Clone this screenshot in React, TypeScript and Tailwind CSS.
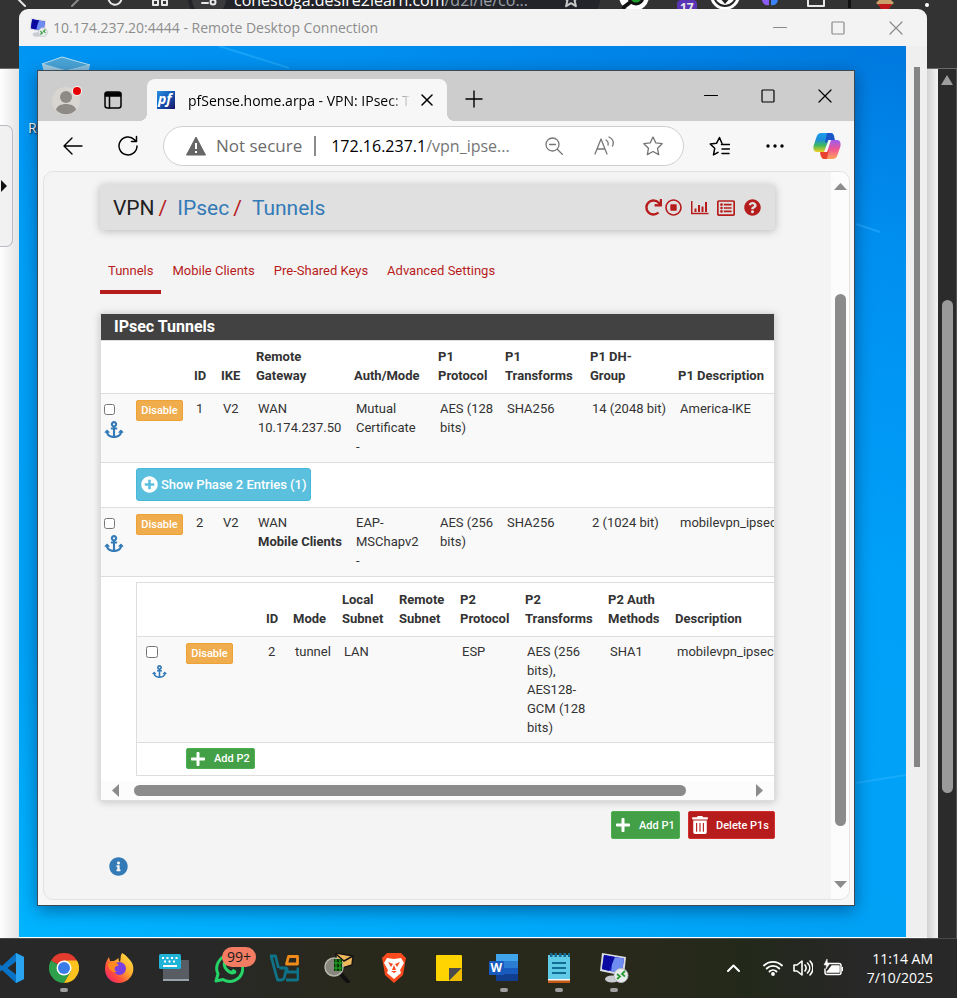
import type { ReactNode } from "react";
import {
  FaAnchor,
  FaInfoCircle,
  FaPlus,
  FaPlusCircle,
  FaQuestionCircle,
  FaRedo,
  FaRegListAlt,
  FaRegStopCircle,
  FaTrashAlt,
} from "react-icons/fa";

const line = { fill: "none", stroke: "currentColor", strokeLinecap: "round", strokeLinejoin: "round" } as const;

/* ---------- host browser behind the remote session ---------- */

function HostToolbar() {
  return (
    <header className="h-[69px] overflow-hidden border-b border-[#6b6b6b] bg-[#333333] text-[#e8e8e8]">
      <div className="-mt-[21px] flex h-[40px] items-center whitespace-nowrap">
        <svg className="ml-[16px] size-[18px] shrink-0" viewBox="0 0 18 18" {...line} strokeWidth="2">
          <path d="M16 9H3M9 2 2 9l7 7" />
        </svg>
        <svg className="ml-[29px] size-[18px] shrink-0 text-[#8b8b8b]" viewBox="0 0 18 18" {...line} strokeWidth="2">
          <path d="M2 9h13M9 2l7 7-7 7" />
        </svg>
        <svg className="ml-[25px] size-[18px] shrink-0" viewBox="0 0 18 18" {...line} strokeWidth="2">
          <path d="M15.500 8a6.500 6.500 0 1 1-2-4.500M15 1v4h-4" />
        </svg>
        <svg className="ml-[27px] size-[18px] shrink-0" viewBox="0 0 18 18" {...line} strokeWidth="2">
          <path d="M2 2h5v5H2zM11 2h5v5h-5zM2 10h5v5H2zM11 10h5v5h-5z" />
        </svg>
        <div className="ml-[19px] flex h-[40px] w-[412px] shrink-0 items-center rounded-full bg-[#23242a]">
          <span className="ml-[4px] flex size-[34px] items-center justify-center rounded-full bg-[#3a3a3d]">
            <svg className="size-[18px]" viewBox="0 0 18 18" {...line} strokeWidth="2">
              <path d="M2 5h7M2 13h6" />
              <circle cx="13" cy="5" r="2.500" />
              <circle cx="13" cy="12" r="2.500" />
            </svg>
          </span>
          <span className="mt-[2px] ml-[8px] w-[328px] font-['Open_Sans'] text-[16px] text-white">
            conestoga.desire2learn.com<span className="text-[#9aa0a6]">/d2l/le/co...</span>
          </span>
          <svg className="size-[18px] shrink-0 text-[#c8c8c8]" viewBox="0 0 18 18" {...line} strokeWidth="2">
            <path d="m9 1 2.200 5.200 5.800.5-4.400 3.800 1.300 5.700L9 13.200l-4.900 3 1.300-5.700L1 6.700l5.800-.5z" />
          </svg>
        </div>
        <svg className="ml-[18px] size-[32px] shrink-0" viewBox="0 0 32 32">
          <circle cx="16" cy="13" r="15" fill="#fff" />
          <path d="M6 24l8-6" stroke="#111" strokeWidth="4" strokeLinecap="round" />
          <circle cx="18" cy="14" r="7" fill="#1c9c2c" stroke="#111" strokeWidth="3" />
        </svg>
        <span className="mt-[18px] ml-[27px] rounded-[4px] bg-[#5b34b4] px-[3px] font-['Open_Sans'] text-[12px] leading-[16px] font-bold">
          17
        </span>
        <svg className="ml-[12px] size-[32px] shrink-0" viewBox="0 0 32 32">
          <circle cx="16" cy="12" r="15" fill="#fff" />
          <circle cx="16" cy="12" r="11" fill="none" stroke="#222" strokeWidth="2" />
          <path d="M10 14l6 7 6-7-3-5h-6z" fill="#222" />
        </svg>
        <svg className="ml-[20px] size-[18px] shrink-0" viewBox="0 0 18 18">
          <path d="M8 1C3 1 1 5 1 9c0 5 4 7 7 6z" fill="#8b5cf6" />
          <path d="M10 1c5 0 7 4 7 8 0 5-4 7-7 6z" fill="#3b82f6" />
        </svg>
        <svg className="ml-[27px] size-[20px] shrink-0" viewBox="0 0 20 20" {...line} strokeWidth="2">
          <path d="M2 6h5V3h5v3h6v11H2z" />
        </svg>
        <span className="ml-[22px] h-[18px] w-[3px] bg-[#111111]" />
        <svg className="ml-[22px] size-[24px] shrink-0" viewBox="0 0 24 24">
          <path d="M3 16l9-9 9 9-5 4H8z" fill="#c9a06a" />
          <path d="M5 17h14l-3 5H8z" fill="#c01818" />
        </svg>
        <span className="ml-[28px] mt-[12px] size-[4px] shrink-0 rounded-full bg-white" />
      </div>
    </header>
  );
}

function HostPage() {
  return (
    <div className="flex flex-1 justify-between bg-white">
      <div className="w-[19px] bg-gradient-to-r from-white to-[#e3e3e3] pt-[56px]">
        <div className="flex h-[122px] w-[13px] items-center rounded-r-[7px] border border-l-0 border-[#b9bcc2] bg-[#f1f1f2]">
          <svg className="h-[14px] w-[7px]" viewBox="0 0 7 14">
            <path d="M1 1v12l6-6z" fill="#111" />
          </svg>
        </div>
      </div>
      <div className="flex w-[30px]">
        <div className="w-[11px] bg-gradient-to-r from-[#d2d2d2] to-[#f3f3f3]" />
        <div className="flex flex-1 flex-col items-center border-r border-[#555555] bg-[#2b2b2b] pt-[6px]">
          <svg className="h-[10px] w-[12px]" viewBox="0 0 12 10">
            <path d="M6 0 12 10H0z" fill="#9d9d9d" />
          </svg>
          <div className="mt-[215px] h-[493px] w-[11px] rounded-full bg-[#9a9a9a]" />
        </div>
      </div>
    </div>
  );
}

/* ---------- remote desktop window ---------- */

function RdpIcon({ className }: { className: string }) {
  return (
    <svg className={className} viewBox="0 0 30 30">
      <ellipse cx="13" cy="26" rx="7" ry="3.500" fill="#c9ccd2" />
      <path d="M3 0l24 4-2 19L1 18z" fill="#d8dbe2" />
      <path d="M5 2l20 3.500-2 15L3 16z" fill="#1414c8" />
      <path d="M14 4l11 1.500-2 15-11-2z" fill="#6f8df0" />
      <path d="M5 2l11 2-6 14-7-2z" fill="#0a0aa0" />
      <circle cx="22" cy="22.500" r="7" fill="#e9ebec" stroke="#b8bcc0" />
      <path d="M18 21l3 2.500-3 2.500M26 18l-3 3 3 2.500" fill="none" stroke="#2a9a32" strokeWidth="1.800" />
    </svg>
  );
}

function WindowControls({ className, wide }: { className: string; wide: string }) {
  return (
    <div className={className}>
      <button type="button" aria-label="Minimize" className={wide}>
        <svg className="size-[14px]" viewBox="0 0 14 14" {...line}>
          <path d="M.5 6.500h13" />
        </svg>
      </button>
      <button type="button" aria-label="Maximize" className={wide}>
        <svg className="size-[14px]" viewBox="0 0 14 14" {...line}>
          <rect x="1" y="1" width="12" height="12" rx="1" strokeWidth="1.200" />
        </svg>
      </button>
      <button type="button" aria-label="Close" className={wide}>
        <svg className="size-[14px]" viewBox="0 0 14 14" {...line} strokeWidth="1.200">
          <path d="m1 1 12 12M13 1 1 13" />
        </svg>
      </button>
    </div>
  );
}

function RemoteDesktop({ children }: { children: ReactNode }) {
  return (
    <section className="absolute top-[9px] right-[30px] bottom-[60px] left-[19px] flex flex-col overflow-hidden rounded-t-[9px] border-b border-white bg-[#f3f3f3]">
      <div className="flex h-[37px] shrink-0 items-center pl-[10px]">
        <RdpIcon className="size-[19px]" />
        <h1 className="ml-[5px] font-['Open_Sans'] text-[14px] text-[#8d8d8d]">
          10.174.237.20:4444 - Remote Desktop Connection
        </h1>
        <WindowControls
          className="mr-[2px] ml-auto flex self-stretch text-[#8a8a8a]"
          wide="flex w-[58px] items-center justify-center"
        />
      </div>
      <div className="flex min-h-0 flex-1">
        <div className="relative flex-1 overflow-hidden bg-[linear-gradient(200deg,#0078de_0%,#0090f0_18%,#00a0f8_45%,#00a2f6_75%,#00b4ff_100%)]">
          <svg className="absolute inset-0 size-full" preserveAspectRatio="none" viewBox="0 0 887 891">
            <path d="M200 0 270 22M837 178l24 8M837 737l50-8" stroke="#2fb4ff" strokeWidth="2" opacity=".5" />
          </svg>
          <svg className="absolute top-[10px] left-[23px] h-[40px] w-[48px]" viewBox="0 0 48 40">
            <path d="M0 8 20 1l28 8-24 6z" fill="#4aa6d8" stroke="#b9e1f4" />
            <path d="M0 8l24 7v25L6 36z" fill="#a5cfe4" />
            <path d="M48 9l-24 6v25l18-4z" fill="#8cc4e0" />
          </svg>
          <span className="absolute top-[71px] left-[9px] font-['Open_Sans'] text-[14px] text-white [text-shadow:1px_1px_2px_#000]">
            R
          </span>
          {children}
        </div>
        <div className="flex w-[21px] justify-center bg-[#efefef] pt-[21px]">
          <div className="h-[700px] w-[6px] bg-[#858585]" />
        </div>
      </div>
    </section>
  );
}

/* ---------- Edge window inside the session ---------- */

function EdgeTabs() {
  return (
    <div className="flex h-[50px] shrink-0 items-end bg-[#cdcdcd]">
      <div className="flex flex-1 items-end">
        <button type="button" aria-label="Profile" className="mb-[5px] ml-[14px] size-[32px]">
          <svg viewBox="0 0 32 32">
            <circle cx="14" cy="17" r="14" fill="#d9d6d2" />
            <circle cx="14" cy="13" r="6" fill="#8e8a86" />
            <path d="M4 26c1-8 19-8 20 0a14 14 0 0 1-20 0z" fill="#8e8a86" />
            <circle cx="25" cy="7" r="5" fill="#f5f5f5" />
            <circle cx="25" cy="7" r="4" fill="#e60000" />
          </svg>
        </button>
        <button type="button" aria-label="Tab actions" className="mb-[12px] ml-[20px] size-[18px]">
          <svg viewBox="0 0 18 18" {...line} strokeWidth="1.500">
            <rect x="1" y="1" width="16" height="16" rx="2.500" />
            <path d="M1.500 2h15v3h-15z" fill="currentColor" />
            <path d="M5.500 5v12" />
          </svg>
        </button>
        <span className="ml-[17px] size-[8px] bg-[radial-gradient(circle_at_0_0,#cdcdcd_8px,#f7f7f7_8px)]" />
        <div className="flex h-[42px] w-[300px] items-center rounded-t-[8px] bg-[#f7f7f7] pl-[10px]">
          <svg className="size-[18px]" viewBox="0 0 18 18">
            <defs>
              <linearGradient id="pf" x1="0" x2="1" y1="0" y2="1">
                <stop offset="0" stopColor="#2d8fe0" />
                <stop offset=".5" stopColor="#1556b4" />
                <stop offset="1" stopColor="#1b1464" />
              </linearGradient>
            </defs>
            <rect width="18" height="18" fill="url(#pf)" />
            <text x="1" y="13" fill="#fff" fontFamily="Open Sans" fontSize="14" fontStyle="italic" fontWeight="700">
              pf
            </text>
          </svg>
          <span className="ml-[13px] w-[223px] overflow-hidden font-['Open_Sans'] text-[14px] whitespace-nowrap text-black [mask-image:linear-gradient(to_right,#000_90%,transparent_100%)]">
            pfSense.home.arpa - VPN: IPsec: Tunnels
          </span>
          <button type="button" aria-label="Close tab" className="ml-[10px] size-[12px]">
            <svg viewBox="0 0 12 12" {...line} strokeWidth="1.500">
              <path d="m1 1 10 10M11 1 1 11" />
            </svg>
          </button>
        </div>
        <span className="size-[8px] bg-[radial-gradient(circle_at_100%_0,#cdcdcd_8px,#f7f7f7_8px)]" />
        <button type="button" aria-label="New tab" className="mb-[13px] ml-[10px] size-[18px]">
          <svg viewBox="0 0 18 18" {...line} strokeWidth="1.400">
            <path d="M9 1v16M1 9h16" />
          </svg>
        </button>
      </div>
      <WindowControls className="mr-px flex h-full text-black" wide="flex w-[57px] items-center justify-center" />
    </div>
  );
}

function EdgeToolbar() {
  return (
    <div className="flex h-[50px] shrink-0 items-center bg-[#f7f7f7] text-black">
      <button type="button" aria-label="Back" className="ml-[25px] size-[20px]">
        <svg viewBox="0 0 20 20" {...line} strokeWidth="1.400">
          <path d="M19 10H1M9 2 1 10l8 8" />
        </svg>
      </button>
      <button type="button" aria-label="Refresh" className="ml-[34px] size-[22px]">
        <svg viewBox="0 0 22 22" {...line} strokeWidth="1.500">
          <path d="M20 11a9 9 0 1 1-2.500-6.300L19 6.500M19.500 1.500v5h-5" />
        </svg>
      </button>
      <div className="ml-[24px] flex h-[40px] flex-1 items-center rounded-full border border-[#cfcfcf] bg-white font-['Open_Sans'] text-[17px]">
        <svg className="ml-[22px] size-[20px] shrink-0" viewBox="0 0 20 20">
          <path d="M10 1 19.500 19H.5z" fill="#666" stroke="#666" strokeLinejoin="round" />
          <path d="M10 7v6M10 15v2" stroke="#fff" strokeWidth="2" />
        </svg>
        <span className="ml-[10px] text-[#6b6b6b]">Not secure</span>
        <span className="mr-[15px] ml-[12px] h-[20px] w-[2px] bg-[#8a8a8a]" />
        <label htmlFor="address" className="sr-only">
          Address
        </label>
        <span className="relative flex min-w-0 flex-1">
          <input id="address" defaultValue="" className="absolute inset-0 bg-transparent outline-none" />
          <span className="pointer-events-none text-[16px] whitespace-nowrap">
            172.16.237.1<span className="text-[#767676]">/vpn_ipse...</span>
          </span>
        </span>
        <button type="button" aria-label="Zoom" className="size-[18px] text-[#767676]">
          <svg viewBox="0 0 18 18" {...line} strokeWidth="1.300">
            <circle cx="7.500" cy="7.500" r="6.500" />
            <path d="m12.500 12.500 5 5M4.500 7.500h6" />
          </svg>
        </button>
        <button type="button" aria-label="Read aloud" className="ml-[31px] size-[20px] text-[#767676]">
          <svg viewBox="0 0 20 20" {...line} strokeWidth="1.300">
            <path d="M1 18 7 3l6 15M3 13h8M12 4c2 1 2.500 3 2 5M15 1c4 2 5 5.500 3.500 9" />
          </svg>
        </button>
        <button type="button" aria-label="Add to favorites" className="mr-[20px] ml-[29px] size-[20px] text-[#767676]">
          <svg viewBox="0 0 20 20" {...line} strokeWidth="1.300">
            <path d="m10 1 2.800 5.900 6.400.8-4.700 4.500 1.200 6.400L10 15.500l-5.700 3.100 1.200-6.400L.8 7.700l6.400-.8z" />
          </svg>
        </button>
      </div>
      <button type="button" aria-label="Favorites" className="ml-[25px] size-[21px]">
        <svg viewBox="0 0 21 21" {...line} strokeWidth="1.500">
          <path d="M13 7.500 10.500 1.500 7.600 7.200l-6.400.8 4.500 4.300-1.200 6.500 4.500-2.400M12.500 8.500h8M13 13h7.500M13 17.500h7" />
        </svg>
      </button>
      <button type="button" aria-label="Settings and more" className="ml-[36px] size-[18px]">
        <svg viewBox="0 0 18 18" fill="#000">
          <circle cx="2" cy="9" r="1.700" />
          <circle cx="9" cy="9" r="1.700" />
          <circle cx="16" cy="9" r="1.700" />
        </svg>
      </button>
      <button type="button" aria-label="Copilot" className="mr-[13px] ml-[29px] size-[28px]">
        <svg viewBox="0 0 28 28">
          <defs>
            <linearGradient id="cpA" x1="0" x2="0" y1="0" y2="1">
              <stop offset="0" stopColor="#1a9df0" />
              <stop offset=".35" stopColor="#1f8fd8" />
              <stop offset=".65" stopColor="#3fb860" />
              <stop offset="1" stopColor="#f0d020" />
            </linearGradient>
            <linearGradient id="cpB" x1="0" x2="0" y1="0" y2="1">
              <stop offset="0" stopColor="#9a5cf0" />
              <stop offset=".5" stopColor="#f0568f" />
              <stop offset="1" stopColor="#ffa45a" />
            </linearGradient>
          </defs>
          <path d="M8 1h10c2 0 3 2 3.500 4L17 8l-3 9c-1 3-3 3-5 3H4c-3 0-4-3-3.500-6L3.500 5C4.500 2 6 1 8 1z" fill="url(#cpA)" />
          <path d="M14 1h4c2 0 3 3 4 7h-5c-2 0-3 1-3 3l-2-1z" fill="#1b55c8" />
          <path d="M20 27H11c-2 0-3-2-4-5l4-2 4-9c1-3 3-3 5-3h4c3 0 4 3 3.500 6l-3 9c-1 3-3 4-4.500 4z" fill="url(#cpB)" />
          <path d="M14 27h-3c-2 0-3-3-4-7h5c2 0 3-1 4-3z" fill="#e8432e" />
          <path d="M15.500 8H18l-4 12h-3z" fill="#f7f7f7" />
        </svg>
      </button>
    </div>
  );
}

/* ---------- pfSense page ---------- */

function Breadcrumb() {
  return (
    <header className="flex h-[45px] items-center rounded-[3px] bg-[#e0e0e0] pr-[14px] pl-[13px] shadow-[0_1px_8px_rgba(0,0,0,0.25)]">
      <h2 className="flex text-[21px] leading-[24px] text-[#212121]">
        VPN
        <span className="ml-[4px] text-[#b71c1c]">/</span>
        <a href="#ipsec" className="ml-[10px] text-[#337ab7]">IPsec</a>
        <span className="ml-[4px] text-[#b71c1c]">/</span>
        <a href="#tunnels" className="ml-[10px] text-[#337ab7]">Tunnels</a>
      </h2>
      <div className="ml-auto flex items-center text-[#b71c1c]">
        <a href="#restart" aria-label="Restart service"><FaRedo className="size-[17px]" /></a>
        <a href="#stop" aria-label="Stop service" className="ml-[3px]"><FaRegStopCircle className="size-[17px]" /></a>
        <a href="#status" aria-label="Status" className="ml-[9px]">
          <svg className="h-[15px] w-[18px]" viewBox="0 0 18 15" fill="none" stroke="currentColor">
            <path d="M.75 1v12.500H17.500" strokeWidth="1.500" />
            <path d="M4.500 8.500V12M8 5v7M11.500 6.500V12M15 2v10" strokeWidth="2" />
          </svg>
        </a>
        <a href="#logs" aria-label="Logs" className="ml-[8px]"><FaRegListAlt className="size-[18px]" /></a>
        <a href="#help" aria-label="Help" className="ml-[9px]"><FaQuestionCircle className="size-[17px]" /></a>
      </div>
    </header>
  );
}

function SectionTabs() {
  return (
    <nav className="mt-[20px] flex gap-[3px] text-[13px] leading-[19px] text-[#b71c1c]">
      <a href="#t1" className="border-b-4 border-[#b71c1c] px-2 pt-[11px] pb-[10px]">Tunnels</a>
      <a href="#t2" className="px-2 pt-[11px]">Mobile Clients</a>
      <a href="#t3" className="px-2 pt-[11px]">Pre-Shared Keys</a>
      <a href="#t4" className="px-2 pt-[11px]">Advanced Settings</a>
    </nav>
  );
}

const th = "pl-[4px] align-bottom text-left font-bold whitespace-pre";
const td = "border-t border-[#dddddd] pt-[5px] pb-[6px] pl-[6px] align-top whitespace-pre";

function DisableButton() {
  return (
    <button
      type="button"
      className="mt-px block h-[21px] w-[47px] rounded-[2px] border border-[#eea236] bg-[#f0ad4e] text-[11px] leading-[19px] font-medium text-white"
    >
      Disable
    </button>
  );
}

function SelectCell({ label, anchor, box }: { label: string; anchor: string; box: string }) {
  return (
    <>
      <input type="checkbox" aria-label={label} className={box} />
      <FaAnchor className={anchor} />
    </>
  );
}

type P1 = { id: string; gateway: ReactNode; auth: string; protocol: string; group: string; description: string };

function Phase1Row({ p1 }: { p1: P1 }) {
  return (
    <tr className="bg-[#f9f9f9]">
      <td className="border-t border-[#dddddd] pt-[5px] pl-[3px] align-top">
        <SelectCell
          label={"Select tunnel " + p1.id}
          box="mt-[5px] block size-[11px] accent-[#337ab7]"
          anchor="mt-[6px] h-[17px] w-[20px] text-[#337ab7]"
        />
      </td>
      <td className={td}><DisableButton /></td>
      <td className={td}>{p1.id}</td>
      <td className={td}>V2</td>
      <td className={td}>{p1.gateway}</td>
      <td className={td}>{p1.auth}</td>
      <td className={td}>{p1.protocol}</td>
      <td className={td}>SHA256</td>
      <td className={td}>{p1.group}</td>
      <td className={td}>{p1.description}</td>
    </tr>
  );
}

function Phase2Table() {
  return (
    <table className="w-full table-fixed border-separate border-spacing-0 border border-[#dddddd]">
      <colgroup>
        <col className="w-[43px]" />
        <col className="w-[82px]" />
        <col className="w-[27px]" />
        <col className="w-[49px]" />
        <col className="w-[57px]" />
        <col className="w-[61px]" />
        <col className="w-[65px]" />
        <col className="w-[83px]" />
        <col className="w-[67px]" />
        <col />
      </colgroup>
      <thead>
        <tr className="h-[53px]">
          <th />
          <th />
          <th className={th + " pb-[8px]"}>ID</th>
          <th className={th + " pb-[8px]"}>Mode</th>
          <th className={th + " pb-[8px]"}>{"Local\nSubnet"}</th>
          <th className={th + " pb-[8px]"}>{"Remote\nSubnet"}</th>
          <th className={th + " pb-[8px]"}>{"P2\nProtocol"}</th>
          <th className={th + " pb-[8px]"}>{"P2\nTransforms"}</th>
          <th className={th + " pb-[8px]"}>{"P2 Auth\nMethods"}</th>
          <th className={th + " pb-[8px]"}>Description</th>
        </tr>
      </thead>
      <tbody>
        <tr className="h-[106px] bg-[#f9f9f9]">
          <td className="border-t border-[#dddddd] pt-[5px] pl-[9px] align-top">
            <SelectCell
              label="Select phase 2 entry 2"
              box="mt-[4px] block size-[12px] accent-[#337ab7]"
              anchor="mt-[7px] ml-[6px] h-[13px] w-[15px] text-[#337ab7]"
            />
          </td>
          <td className={td}><DisableButton /></td>
          <td className={td}>2</td>
          <td className={td}>tunnel</td>
          <td className={td}>LAN</td>
          <td className={td} />
          <td className={td}>ESP</td>
          <td className="border-t border-[#dddddd] pt-[5px] pb-[5px] pl-[6px] align-top whitespace-pre">
            {"AES (256\nbits),\nAES128-\nGCM (128\nbits)"}
          </td>
          <td className={td}>SHA1</td>
          <td className={td}>mobilevpn_ipsec</td>
        </tr>
        <tr>
          <td className={td} />
          <td className={td} colSpan={9}>
            <button
              type="button"
              className="flex h-[21px] w-[69px] items-center rounded-[2px] border border-[#4caf50] bg-[#43a047] pl-[3px] text-[11px] font-medium text-white"
            >
              <FaPlus className="mr-[8px] size-[16px]" />
              Add P2
            </button>
          </td>
        </tr>
      </tbody>
    </table>
  );
}

function TunnelsTable() {
  return (
    <table className="w-[760px] table-fixed border-separate border-spacing-0 bg-white">
      <colgroup>
        <col className="w-[29px]" />
        <col className="w-[60px]" />
        <col className="w-[27px]" />
        <col className="w-[35px]" />
        <col className="w-[98px]" />
        <col className="w-[84px]" />
        <col className="w-[67px]" />
        <col className="w-[85px]" />
        <col className="w-[88px]" />
        <col />
      </colgroup>
      <thead>
        <tr className="h-[52px]">
          <th />
          <th />
          <th className={th + " pb-[8px]"}>ID</th>
          <th className={th + " pb-[8px]"}>IKE</th>
          <th className={th + " pb-[8px]"}>{"Remote\nGateway"}</th>
          <th className={th + " pb-[8px]"}>Auth/Mode</th>
          <th className={th + " pb-[8px]"}>{"P1\nProtocol"}</th>
          <th className={th + " pb-[8px]"}>{"P1\nTransforms"}</th>
          <th className={th + " pb-[8px]"}>{"P1 DH-\nGroup"}</th>
          <th className={th + " pb-[8px]"}>P1 Description</th>
        </tr>
      </thead>
      <tbody>
        <Phase1Row
          p1={{
            id: "1",
            gateway: "WAN\n10.174.237.50",
            auth: "Mutual\nCertificate\n-",
            protocol: "AES (128\nbits)",
            group: "14 (2048 bit)",
            description: "America-IKE",
          }}
        />
        <tr>
          <td className={td} />
          <td className={td} colSpan={9}>
            <button
              type="button"
              className="flex h-[33px] w-[175px] items-center rounded-[3px] border border-[#46b8da] bg-[#5bc0de] pl-[4px] text-[13px] font-medium text-white"
            >
              <FaPlusCircle className="mr-[3px] size-[17px]" />
              Show Phase 2 Entries (1)
            </button>
          </td>
        </tr>
        <Phase1Row
          p1={{
            id: "2",
            gateway: (
              <>
                {"WAN\n"}
                <b>Mobile Clients</b>
              </>
            ),
            auth: "EAP-\nMSChapv2\n-",
            protocol: "AES (256\nbits)",
            group: "2 (1024 bit)",
            description: "mobilevpn_ipsec",
          }}
        />
        <tr>
          <td className="border-t border-[#dddddd]" />
          <td className="border-t border-[#dddddd] py-[5px] pl-[6px]" colSpan={9}>
            <Phase2Table />
          </td>
        </tr>
      </tbody>
    </table>
  );
}

function TunnelsPanel() {
  return (
    <section className="mt-[19px] border border-[#dddddd] bg-white shadow-[0_1px_8px_rgba(0,0,0,0.2)]">
      <h3 className="h-[27px] border-b border-[#dddddd] bg-[#424242] pl-[13px] text-[16px] leading-[26px] font-bold text-white">
        IPsec Tunnels
      </h3>
      <div className="overflow-hidden">
        <TunnelsTable />
      </div>
      <div className="flex h-[19px] items-center bg-[#fcfcfc] px-[11px]">
        <svg className="h-[13px] w-[7px]" viewBox="0 0 7 13">
          <path d="M7 0v13L0 6.500z" fill="#8b8b8b" />
        </svg>
        <div className="flex flex-1 px-[15px]">
          <div className="h-[11px] w-[91%] rounded-full bg-[#8b8b8b]" />
        </div>
        <svg className="h-[13px] w-[7px]" viewBox="0 0 7 13">
          <path d="M0 0v13l7-6.500z" fill="#8b8b8b" />
        </svg>
      </div>
    </section>
  );
}

function PfSensePage() {
  return (
    <div className="mr-[4px] mb-[5px] ml-[5px] flex min-h-0 flex-1 overflow-hidden rounded-[10px] border border-[#e2e2e2] bg-[#f4f4f4]">
      <main className="min-w-0 flex-1 overflow-hidden px-14 pt-[13px] font-['Roboto'] text-[13px] leading-[19px] text-[#333333]">
        <Breadcrumb />
        <SectionTabs />
        <TunnelsPanel />
        <div className="mt-[10px] flex justify-end gap-[8px] text-[11px] font-medium text-white">
          <button
            type="button"
            className="flex h-[28px] w-[69px] items-center rounded-[2px] border border-[#4caf50] bg-[#43a047] pl-[3px]"
          >
            <FaPlus className="mr-[8px] size-[16px]" />
            Add P1
          </button>
          <button
            type="button"
            className="flex h-[28px] w-[87px] items-center rounded-[2px] border border-[#d32f2f] bg-[#b71c1c] pl-[3px]"
          >
            <FaTrashAlt className="mr-[8px] h-[18px] w-[16px]" />
            Delete P1s
          </button>
        </div>
        <button type="button" aria-label="Information" className="mt-[18px] ml-[9px] block">
          <FaInfoCircle className="size-[19px] text-[#337ab7]" />
        </button>
      </main>
      <div className="flex w-[18px] flex-col items-center bg-[#fcfcfc] pt-[11px] pb-[11px]">
        <svg className="h-[7px] w-[13px]" viewBox="0 0 13 7">
          <path d="M6.500 0 13 7H0z" fill="#8b8b8b" />
        </svg>
        <div className="mt-[104px] h-[532px] w-[11px] rounded-full bg-[#8b8b8b]" />
        <svg className="mt-auto h-[7px] w-[13px]" viewBox="0 0 13 7">
          <path d="M6.500 7 13 0H0z" fill="#8b8b8b" />
        </svg>
      </div>
    </div>
  );
}

function EdgeWindow() {
  return (
    <section className="absolute top-[24px] right-[51px] bottom-[31px] left-[18px] flex flex-col border border-[#3c4a55] bg-[#f7f7f7] shadow-[0_4px_16px_rgba(0,20,60,0.45)]">
      <EdgeTabs />
      <EdgeToolbar />
      <PfSensePage />
    </section>
  );
}

/* ---------- taskbar ---------- */

function TaskItem({ label, running, children }: { label: string; running?: boolean; children: ReactNode }) {
  return (
    <button type="button" aria-label={label} className="relative flex w-[55px] shrink-0 items-center justify-center">
      {children}
      {running && <span className="absolute bottom-[4px] h-[4px] w-[8px] rounded-full bg-[#9f9f9f]" />}
    </button>
  );
}

const glyph = "size-[30px]";

function Taskbar() {
  return (
    <footer className="absolute inset-x-0 bottom-0 flex h-[60px] border-t border-[#4a4a4a] bg-[linear-gradient(90deg,#282828_0%,#282828_22%,#29291b_38%,#29291b_65%,#23291a_78%,#252722_85%,#282828_90%)] pb-[2px] text-white">
      <div className="-ml-[19px] flex">
        <TaskItem label="Visual Studio Code">
          <svg className={glyph} viewBox="0 0 30 30">
            <path d="M22 0 8 13 3 9 0 11l5 4-5 4 3 2 5-4 14 13 8-4V4z" fill="#0a72c4" />
            <path d="M22 0v30l8-4V4z" fill="#2aa4f0" />
            <path d="M22 8.500v13L13.500 15z" fill="#282828" />
          </svg>
        </TaskItem>
        <TaskItem label="Google Chrome" running>
          <svg className={glyph} viewBox="0 0 30 30">
            <path d="M15 15 2 7.500A15 15 0 0 1 28 7.500z" fill="#e33b2e" />
            <path d="M15 15 2 7.500A15 15 0 0 0 15 30l6.500-11z" fill="#2e9f4b" />
            <path d="M15 7.500h13A15 15 0 0 1 15 30l7-12z" fill="#fcc31e" />
            <circle cx="15" cy="15" r="7.500" fill="#fff" />
            <circle cx="15" cy="15" r="6" fill="#3b7de8" />
          </svg>
        </TaskItem>
        <TaskItem label="Firefox">
          <svg className={glyph} viewBox="0 0 30 30">
            <defs>
              <linearGradient id="ff" x1="1" x2="0" y1="0" y2="1">
                <stop offset="0" stopColor="#fff04a" />
                <stop offset=".4" stopColor="#ffab2e" />
                <stop offset=".7" stopColor="#ff4a3c" />
                <stop offset="1" stopColor="#e6148c" />
              </linearGradient>
            </defs>
            <path
              d="M18 0c4 2 5 4 7 6 4 4 5 8 4 13-2 7-8 11-14 11C7 30 1 24 1 16c0-4 1-8 4-12l1 4 4 0 5-3c-1 2 0 3 1 4 1-3 0-6 2-9z"
              fill="url(#ff)"
            />
            <circle cx="15.500" cy="15.500" r="6.500" fill="#7a3fe0" />
            <path d="M4 11c4-3 8-2 11 1l-4 2c-1 3 0 4 2 5-5 1-9-3-9-8z" fill="#ff8a1f" />
          </svg>
        </TaskItem>
        <TaskItem label="On-screen keyboard">
          <svg className={glyph} viewBox="0 0 30 30">
            <rect x="4" y="7" width="26" height="21" rx="1" fill="#585d63" />
            <path d="M4 26h26v2H4z" fill="#9aa3ac" />
            <rect x="0" y="1" width="22" height="15" rx="1.500" fill="#1fb3d8" />
            <path d="M3 5h16" stroke="#fff" strokeWidth="2" strokeDasharray="2 2.500" />
            <path d="M5 8.500h13" stroke="#fff" strokeWidth="2" strokeDasharray="2 2.500" />
            <path d="M4 13h14" stroke="#fff" strokeWidth="2" />
          </svg>
        </TaskItem>
        <TaskItem label="WhatsApp">
          <svg className={glyph} viewBox="0 0 30 30">
            <path d="M2 28l2-7A13 13 0 1 1 9 26.500z" fill="none" stroke="#25d366" strokeWidth="3" strokeLinejoin="round" />
            <path d="M9 9c2-2 3-1 4 2l-1 2c1 2 3 4 5 5l2-2c3 1 4 2 3 4-5 5-15-4-13-11z" fill="#25d366" />
          </svg>
          <span className="absolute top-[8px] right-0 h-[20px] w-[34px] rounded-full bg-[#f47c62] text-center font-['Open_Sans'] text-[14px] leading-[20px] text-[#1b1b1b]">
            99+
          </span>
        </TaskItem>
        <TaskItem label="Security client">
          <svg className={glyph} viewBox="0 0 30 30" fill="none" strokeWidth="2.800" strokeLinejoin="round">
            <path d="M1 3h5.500l3 12M2 3l6.500 24h4c2 0 2.500-1 3-3l2-9h-7" stroke="#0e7288" />
            <path d="M29 14.500V26l-1 1H17" stroke="#0e7288" />
            <path d="M29 19H18v-4" stroke="#0e7288" />
            <path d="M17.500 11l2-7.500h9V11z" stroke="#f08c1a" />
          </svg>
        </TaskItem>
        <TaskItem label="Mail inspector">
          <svg className={glyph} viewBox="0 0 30 30">
            <path d="M12 0l17 3-1 9-16 5z" fill="#efb95a" stroke="#151515" strokeWidth="1.500" />
            <path d="M12 1l8 7 9-5" fill="none" stroke="#151515" strokeWidth="1.500" />
            <path d="M16 20l9 10" stroke="#111" strokeWidth="4" />
            <circle cx="10" cy="14" r="9" fill="#86867c" stroke="#b5b5aa" strokeWidth="1.500" />
            <path d="M10 6h8v12h-8z" fill="#0a3a0a" />
            <path d="M12 6v12M16 6v12M10 10h9M10 15h9" stroke="#25b325" />
          </svg>
        </TaskItem>
        <TaskItem label="Brave">
          <svg className={glyph} viewBox="0 0 30 30">
            <path d="M8 0h14l5 5-1 5-2 12-9 8-9-8-2-12-1-5z" fill="#fb4a1e" />
            <path d="M8 5l7 1 7-1 3 5-4 7 1 3-7 6-7-6 1-3-4-7z" fill="#fff" />
            <path d="M9 9l5 2-2 3zM21 9l-5 2 2 3zM12 18h6l-3 2zM15 12l2 5h-4z" fill="#fb4a1e" />
          </svg>
        </TaskItem>
        <TaskItem label="Sticky Notes">
          <svg className={glyph} viewBox="0 0 30 30">
            <path d="M3 2h24a1 1 0 0 1 1 1v25H3a1 1 0 0 1-1-1V3a1 1 0 0 1 1-1z" fill="#ffd400" />
            <path d="M15 28V15h13z" fill="#4b4b4b" />
            <path d="M28 15v13H15z" fill="#eebc00" />
          </svg>
        </TaskItem>
        <TaskItem label="Word" running>
          <svg className={glyph} viewBox="0 0 30 30">
            <rect x="7" y="1" width="22" height="27" rx="1.500" fill="#2b7cd3" />
            <path d="M7 1h22v7H7z" fill="#41a5ee" />
            <path d="M7 15h22v7H7z" fill="#185abd" />
            <path d="M7 21h22v7H7z" fill="#103f91" />
            <rect x="0" y="8" width="15" height="14" rx="1" fill="#185abd" />
            <text x="1.500" y="19" fill="#fff" fontFamily="Open Sans" fontSize="12" fontWeight="700">
              W
            </text>
          </svg>
        </TaskItem>
        <TaskItem label="Notepad" running>
          <svg className={glyph} viewBox="0 0 30 30">
            <path d="M4 25h22v5H4z" fill="#c65a14" />
            <path d="M4 2h22v24H4z" fill="#5fcbe6" />
            <path d="M4 26h22v1.500H4z" fill="#f5f5f5" />
            <path d="M8 10h14M8 15h14M8 20h14" stroke="#136c94" strokeWidth="2" />
            <path d="M6 2h20" stroke="#136c94" strokeWidth="4" strokeDasharray="2.500 2" />
          </svg>
        </TaskItem>
        <TaskItem label="Remote Desktop Connection" running>
          <RdpIcon className={glyph} />
        </TaskItem>
      </div>
      <div className="ml-auto flex items-center pr-[24px]">
        <svg className="h-[8px] w-[13px]" viewBox="0 0 13 8" {...line} strokeWidth="2">
          <path d="m1 7 5.500-5.500L12 7" />
        </svg>
        <svg className="ml-[23px] h-[16px] w-[20px]" viewBox="0 0 20 16" {...line} strokeWidth="1.800">
          <path d="M1 5.500a13 13 0 0 1 18 0M3.700 8.500a9 9 0 0 1 12.600 0M6.500 11.500a5 5 0 0 1 7 0" />
          <circle cx="10" cy="14" r="1" fill="currentColor" />
        </svg>
        <svg className="ml-[10px] h-[18px] w-[20px]" viewBox="0 0 20 18" {...line} strokeWidth="1.600">
          <path d="M1 6h3l5-4v14l-5-4H1zM12 6c1.500 2 1.500 4 0 6M14.500 4c3 3 3 7 0 10M17 2c4 4 4 10 0 14" />
        </svg>
        <svg className="ml-[10px] h-[17px] w-[20px]" viewBox="0 0 20 17" {...line} strokeWidth="1.500">
          <path d="M7 4.500h9q2 0 2 2v7q0 2-2 2H4q-2 0-2-2V10" />
          <path d="M9 7h7v6H4l2-2z" fill="currentColor" />
          <path d="M4 0 1 6h2.500L3 10l4-6H4.500z" fill="currentColor" strokeWidth=".5" />
          <path d="M19.500 8.500v3" />
        </svg>
        <div className="ml-[20px] w-[70px] text-right font-['Open_Sans'] text-[14px] leading-[19px] whitespace-nowrap">
          <div>11:14 AM</div>
          <div>7/10/2025</div>
        </div>
      </div>
    </footer>
  );
}

export default function App() {
  return (
    <div className="relative flex h-screen min-h-[998px] flex-col overflow-hidden bg-white">
      <HostToolbar />
      <HostPage />
      <RemoteDesktop>
        <EdgeWindow />
      </RemoteDesktop>
      <Taskbar />
    </div>
  );
}
